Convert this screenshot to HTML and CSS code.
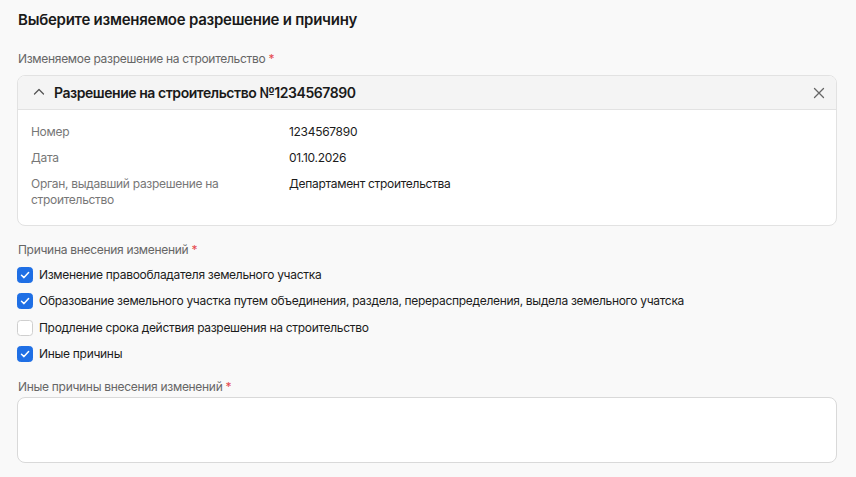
FILE: index.html
```html
<!DOCTYPE html>
<html lang="ru">
<head>
<meta charset="utf-8">
<link rel="stylesheet" href="styles.css">
</head>
<body>
<main class="page">
  <h1 class="title">Выберите изменяемое разрешение и причину</h1>

  <div class="field">
    <div class="label">Изменяемое разрешение на строительство <span class="req">*</span></div>
    <section class="card">
      <header class="card-head">
        <svg class="chev" width="12" height="12" viewBox="0 0 12 12"><path d="M1.5 8 L6 3.5 L10.5 8" fill="none" stroke="#555" stroke-width="1.3" stroke-linecap="round" stroke-linejoin="round"/></svg>
        <span class="card-title">Разрешение на строительство №1234567890</span>
        <svg class="close" width="12" height="12" viewBox="0 0 12 12"><path d="M1.5 1.5 L10.5 10.5 M10.5 1.5 L1.5 10.5" fill="none" stroke="#666" stroke-width="1.3" stroke-linecap="round"/></svg>
      </header>
      <div class="card-body">
        <div class="row"><div class="k">Номер</div><div class="v">1234567890</div></div>
        <div class="row"><div class="k">Дата</div><div class="v">01.10.2026</div></div>
        <div class="row"><div class="k">Орган, выдавший разрешение на строительство</div><div class="v">Департамент строительства</div></div>
      </div>
    </section>
  </div>

  <div class="field reasons">
    <div class="label">Причина внесения изменений <span class="req">*</span></div>
    <ul class="checks">
      <li class="check"><span class="box on"><svg width="12" height="12" viewBox="0 0 12 12"><path d="M2.5 6.2 L5 8.6 L9.6 3.6" fill="none" stroke="#fff" stroke-width="1.5" stroke-linecap="round" stroke-linejoin="round"/></svg></span>Изменение правообладателя земельного участка</li>
      <li class="check"><span class="box on"><svg width="12" height="12" viewBox="0 0 12 12"><path d="M2.5 6.2 L5 8.6 L9.6 3.6" fill="none" stroke="#fff" stroke-width="1.5" stroke-linecap="round" stroke-linejoin="round"/></svg></span>Образование земельного участка путем объединения, раздела, перераспределения, выдела земельного учатска</li>
      <li class="check"><span class="box"></span>Продление срока действия разрешения на строительство</li>
      <li class="check"><span class="box on"><svg width="12" height="12" viewBox="0 0 12 12"><path d="M2.5 6.2 L5 8.6 L9.6 3.6" fill="none" stroke="#fff" stroke-width="1.5" stroke-linecap="round" stroke-linejoin="round"/></svg></span>Иные причины</li>
    </ul>
  </div>

  <div class="field other">
    <div class="label tight">Иные причины внесения изменений <span class="req">*</span></div>
    <textarea class="area"></textarea>
  </div>
</main>
</body>
</html>
```
FILE: styles.css
```css
* { box-sizing: border-box; }
html, body { margin: 0; padding: 0; }
body {
  background: #f9f9f9;
  font-family: Inter, "Noto Sans", sans-serif;
  color: #1c1c1c;
  width: 856px;
  height: 477px;
  overflow: hidden;
}
.page {
  padding: 10px 19px 0 17px;
  display: flex;
  flex-direction: column;
}
.title {
  margin: 0 0 0 1px;
  font-size: 15px;
  line-height: 20px;
  font-weight: 600;
  letter-spacing: -0.25px;
  color: #1a1a1a;
}
.field { display: flex; flex-direction: column; }
.field:first-of-type { margin-top: 21px; }
.label {
  font-size: 12px;
  line-height: 16px;
  letter-spacing: -0.3px;
  color: #666;
  margin: 0 0 8px 1px;
}
.req { color: #e5484d; }
.card {
  background: #fff;
  border: 1px solid #e2e2e2;
  border-radius: 8px;
  overflow: hidden;
}
.card-head {
  height: 34px;
  background: #f4f4f4;
  border-bottom: 1px solid #e2e2e2;
  display: flex;
  align-items: center;
  padding: 0 11px 0 15px;
}
.chev { margin-right: 9px; margin-top: -1px; }
.card-title {
  flex: 1;
  font-size: 14px;
  font-weight: 600;
  letter-spacing: -0.45px;
  color: #1a1a1a;
}
.card-body {
  padding: 14px 14px 17px 13px;
  display: flex;
  flex-direction: column;
  gap: 10px;
}
.row { display: flex; font-size: 12px; line-height: 16px; letter-spacing: -0.3px; }
.k { width: 258px; color: #777; padding-right: 40px; }
.v { color: #1c1c1c; }
.reasons { margin-top: 16px; }
.reasons .label { margin-bottom: 9px; }
.checks {
  list-style: none;
  margin: 0;
  padding: 0;
  display: flex;
  flex-direction: column;
  gap: 10.4px;
}
.check {
  display: flex;
  align-items: center;
  font-size: 12px;
  line-height: 16px;
  letter-spacing: -0.3px;
  color: #1c1c1c;
}
.box {
  width: 16px;
  height: 16px;
  border-radius: 3.5px;
  border: 1px solid #cfcfcf;
  background: #fff;
  margin-right: 6px;
  display: flex;
  align-items: center;
  justify-content: center;
  flex: none;
}
.box.on { background: #1f6fe5; border-color: #1f6fe5; }
.other { margin-top: 17px; }
.label.tight { margin-bottom: 2px; }
.area {
  display: block;
  width: 100%;
  height: 66px;
  background: #fff;
  border: 1px solid #d9d9d9;
  border-radius: 8px;
  resize: none;
  font-family: inherit;
  margin: 0;
}
```
